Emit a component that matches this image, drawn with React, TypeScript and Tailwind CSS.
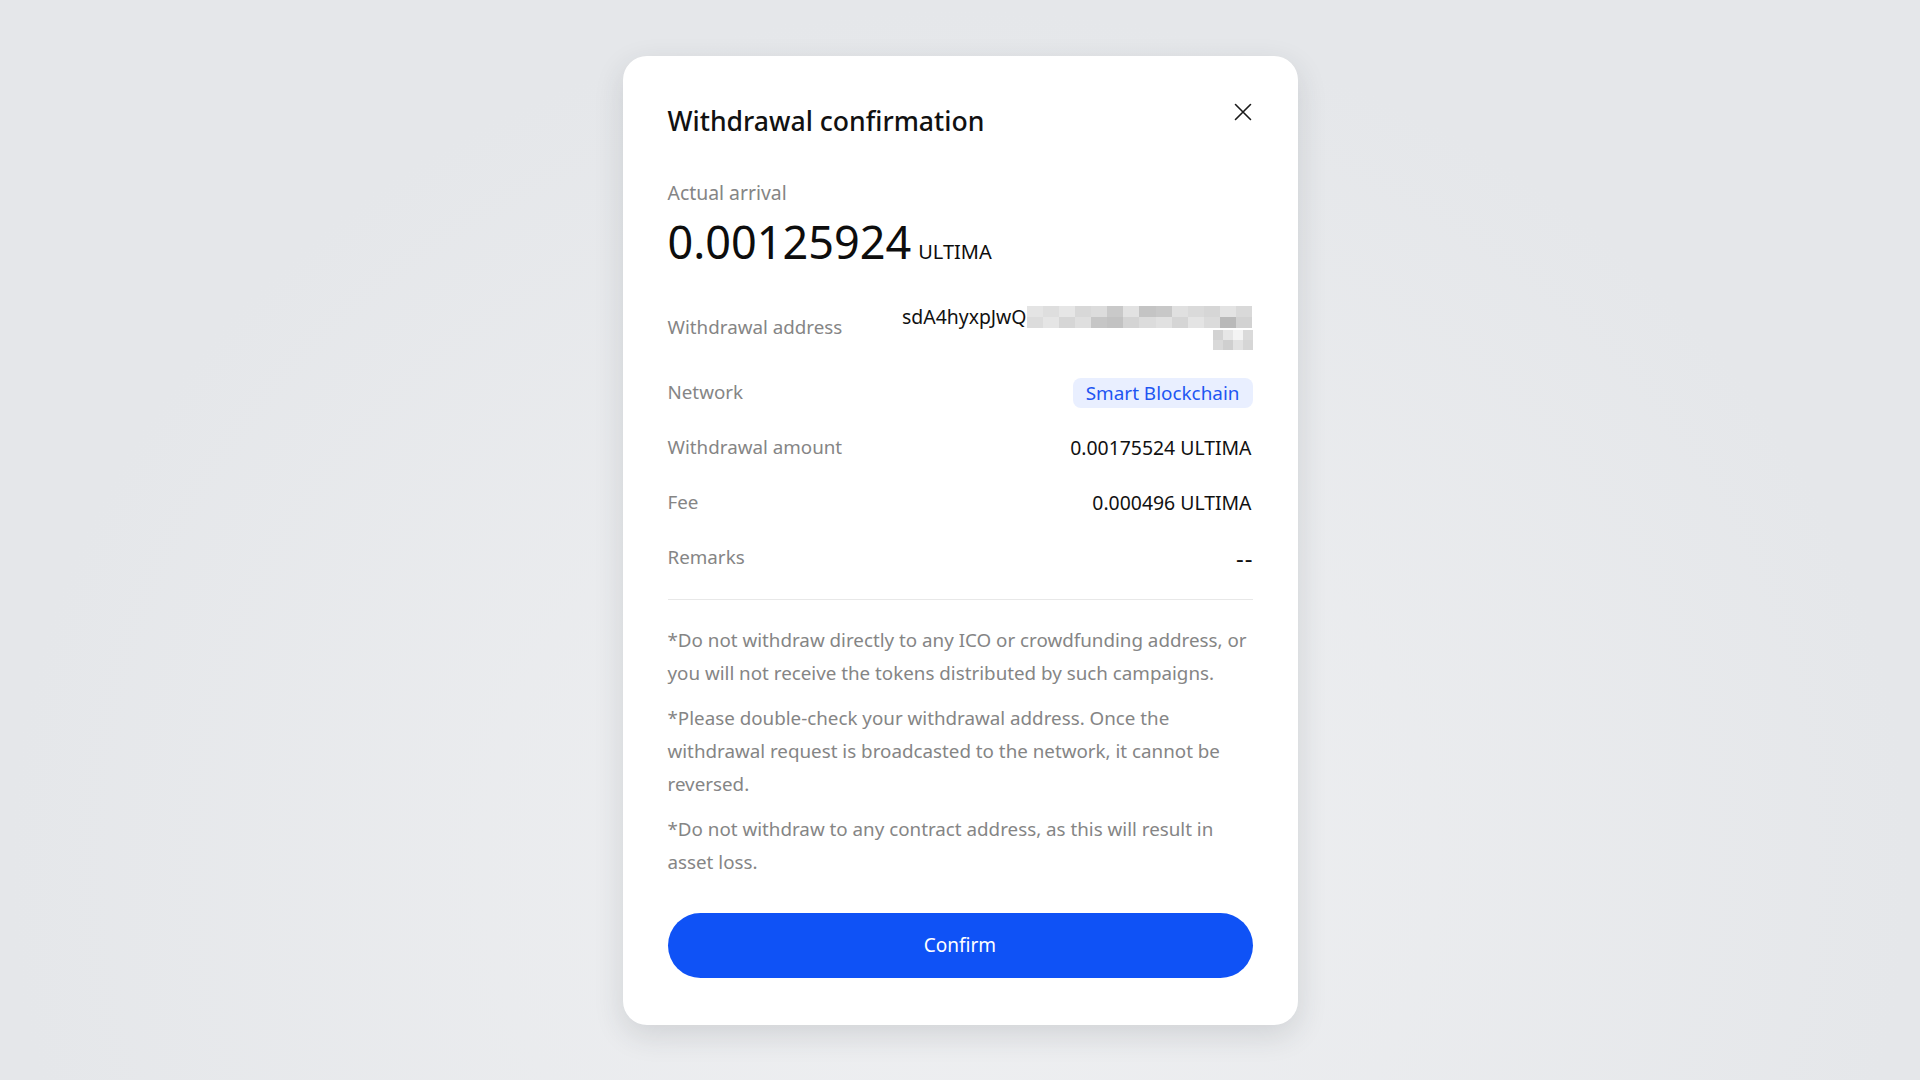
import React from "react";

const topCells = [
  "bg-[#e4e4e4]", "bg-[#dedede]", "bg-[#e6e6e6]", "bg-[#d8d8d8]", "bg-[#dcdcdc]", "bg-[#c9c9c9]",
  "bg-[#e2e2e2]", "bg-[#c4c4c4]", "bg-[#c8c8c8]", "bg-[#e0e0e0]", "bg-[#dadada]", "bg-[#d6d6d6]",
  "bg-[#e3e3e3]", "bg-[#d9d9d9]",
];
const bottomCells = [
  "bg-[#dcdcdc]", "bg-[#e5e5e5]", "bg-[#d6d6d6]", "bg-[#dfdfdf]", "bg-[#c6c6c6]", "bg-[#c2c2c2]",
  "bg-[#d4d4d4]", "bg-[#dcdcdc]", "bg-[#e1e1e1]", "bg-[#d5d5d5]", "bg-[#e4e4e4]", "bg-[#dbdbdb]",
  "bg-[#b9b9b9]", "bg-[#d2d2d2]",
];

const Mosaic: React.FC = () => (
  <div className="flex h-[22px] w-[226px]">
    {topCells.map((top, i) => (
      <div key={i} className="flex flex-1 flex-col">
        <div className={`flex-1 ${top}`} />
        <div className={`flex-1 ${bottomCells[i]}`} />
      </div>
    ))}
  </div>
);

const Row: React.FC<{ label: string; children: React.ReactNode }> = ({ label, children }) => (
  <div className="flex h-[30px] items-center justify-between">
    <span className="text-[18.8px] text-[#858585]">{label}</span>
    {children}
  </div>
);

const App: React.FC = () => {
  return (
    <div
      className="flex min-h-screen w-full items-center justify-center bg-[radial-gradient(ellipse_at_50%_80%,#eff0f2_0%,#e5e7ea_70%)]"
      style={{ fontFamily: '"Noto Sans", Roboto, sans-serif' }}
    >
      <div className="w-[675px] rounded-[24px] bg-white px-[45px] pb-[47px] pt-[48px] shadow-[0_10px_30px_rgba(40,50,60,0.14)]">
        {/* Header */}
        <div className="flex items-start justify-between">
          <h2 className="text-[26.6px] font-medium leading-[34px] text-[#111111]">Withdrawal confirmation</h2>
          <button className="mr-[1px] mt-[-1px] flex h-[18px] w-[18px] items-center justify-center text-[#1a1a1a]">
            <svg width="18" height="18" viewBox="0 0 18 18" fill="none">
              <path d="M1.5 1.5L16.5 16.5M16.5 1.5L1.5 16.5" stroke="currentColor" strokeWidth="1.6" strokeLinecap="round" />
            </svg>
          </button>
        </div>

        {/* Actual arrival */}
        <div className="mt-[42px] text-[19.4px] leading-[26px] text-[#858585]">Actual arrival</div>
        <div className="mt-[8px] flex items-baseline gap-[7px] text-[#0d0d0d]">
          <span className="text-[45px] leading-[56px]">0.00125924</span>
          <span className="text-[20px]">ULTIMA</span>
        </div>

        {/* Details */}
        <div className="mt-[36px] flex items-center justify-between">
          <span className="text-[18.8px] text-[#858585]">Withdrawal address</span>
          <div className="flex flex-col items-end">
            <div className="flex items-center">
              <span className="text-[19.4px] leading-[22px] text-[#111111]">sdA4hyxpJwQ</span>
              <Mosaic />
            </div>
            <div className="mt-[2px] flex h-[20px] w-[40px] flex-col">
              <div className="flex flex-1">
                <div className="flex-1 bg-[#d3d3d3]" />
                <div className="flex-1 bg-[#e6e6e6]" />
                <div className="flex-1 bg-[#f4f4f4]" />
                <div className="flex-1 bg-[#dadada]" />
              </div>
              <div className="flex flex-1">
                <div className="flex-1 bg-[#d9d9d9]" />
                <div className="flex-1 bg-[#cfcfcf]" />
                <div className="flex-1 bg-[#e2e2e2]" />
                <div className="flex-1 bg-[#d6d6d6]" />
              </div>
            </div>
          </div>
        </div>

        <div className="mt-[28px] flex flex-col gap-[25px]">
          <Row label="Network">
            <span className="rounded-[8px] bg-[#e9efff] px-[13px] text-[18.9px] leading-[30px] text-[#1e55f2]">
              Smart Blockchain
            </span>
          </Row>
          <Row label="Withdrawal amount">
            <span className="mr-[1px] text-[19.4px] text-[#111111]">0.00175524 ULTIMA</span>
          </Row>
          <Row label="Fee">
            <span className="mr-[1px] text-[19.4px] text-[#111111]">0.000496 ULTIMA</span>
          </Row>
          <Row label="Remarks">
            <span className="mr-[-1px] text-[24px] leading-[30px] tracking-[1px] text-[#111111]">--</span>
          </Row>
        </div>

        <div className="mt-[26px] h-px bg-[#e8e8e8]" />

        {/* Notes */}
        <div className="mt-[24px] flex flex-col gap-[12px] text-[18.8px] leading-[33px] text-[#858585]">
          <p>*Do not withdraw directly to any ICO or crowdfunding address, or you will not receive the tokens distributed by such campaigns.</p>
          <p>*Please double-check your withdrawal address. Once the withdrawal request is broadcasted to the network, it cannot be reversed.</p>
          <p>*Do not withdraw to any contract address, as this will result in asset loss.</p>
        </div>

        <button className="mt-[34px] flex h-[65px] w-full items-center justify-center rounded-full bg-[#0f52f6] text-[19px] text-white">
          Confirm
        </button>
      </div>
    </div>
  );
};

export default App;
